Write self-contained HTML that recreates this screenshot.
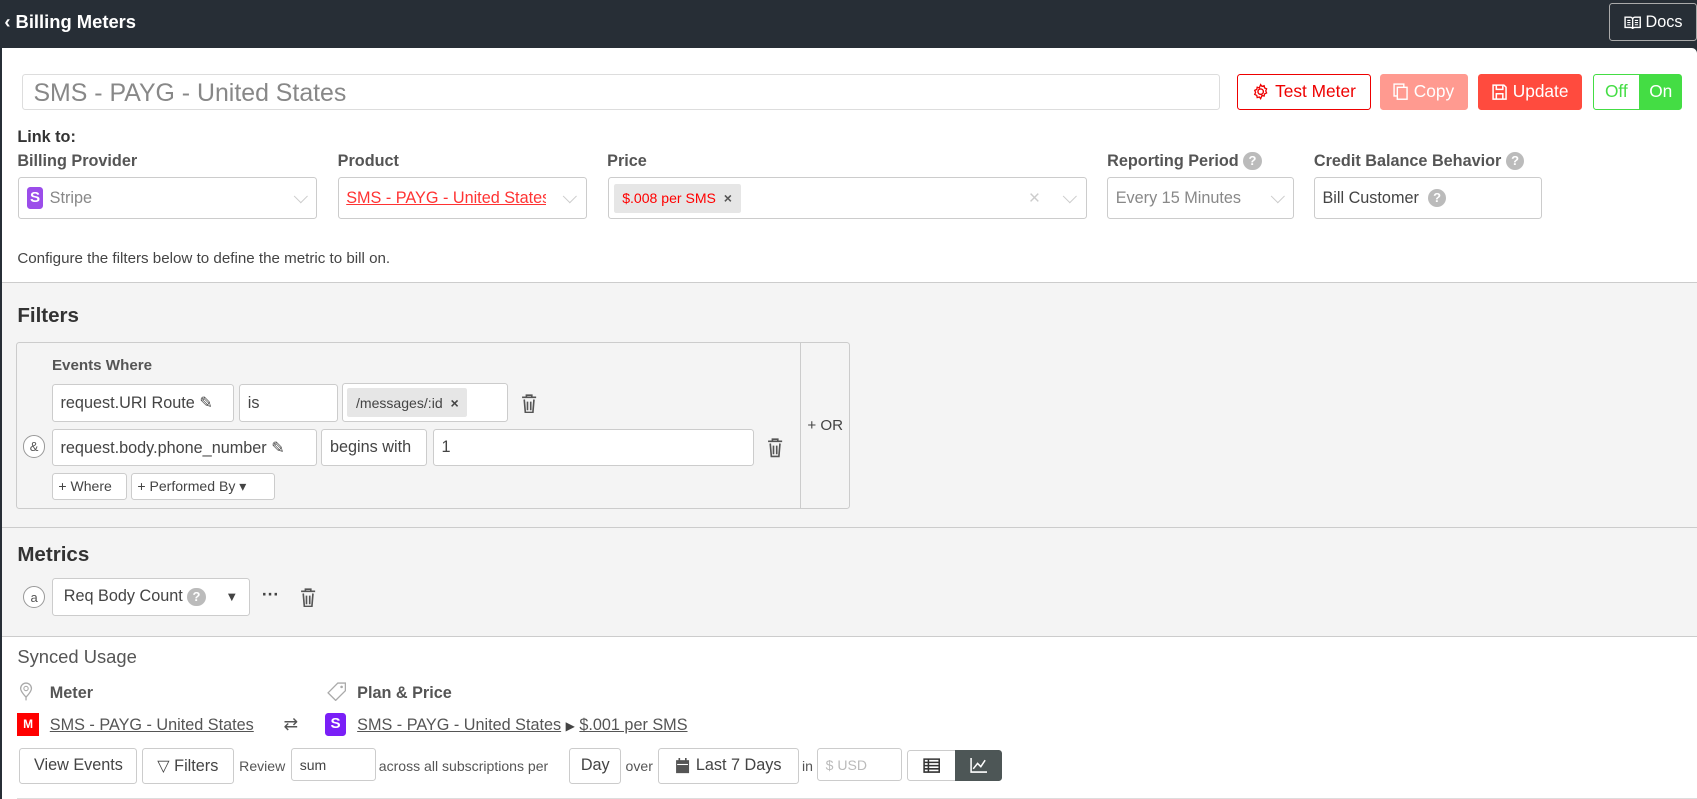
<!DOCTYPE html>
<html><head><style>
html,body{margin:0;padding:0;background:#272e36;overflow:hidden}
#w{position:relative;width:1568px;height:738px;zoom:1.08227;font-family:"Liberation Sans",sans-serif;color:#444;}
.a{position:absolute;box-sizing:border-box}
.box{position:absolute;box-sizing:border-box;border:1px solid #ccc;border-radius:3px;background:#fff;font-size:14px;display:flex;align-items:center;padding-left:7px;white-space:nowrap;overflow:hidden}
.lbl{position:absolute;font-size:15px;font-weight:bold;color:#555}
.q{display:inline-block;width:17px;height:17px;border-radius:50%;background:#bbb;color:#fff;font-size:12px;font-weight:bold;text-align:center;line-height:17px;vertical-align:middle}
.chev{position:absolute;right:10px;top:50%;width:8px;height:8px;border-right:1.5px solid #ccc;border-bottom:1.5px solid #ccc;transform:translateY(-70%) rotate(45deg)}
.circ{position:absolute;width:21px;height:21px;border:1px solid #999;border-radius:50%;font-size:12px;text-align:center;line-height:20px;box-sizing:border-box;background:#fff;color:#555}
.btn{position:absolute;box-sizing:border-box;border:1px solid #ccc;border-radius:3px;background:#fff;font-size:14px;display:flex;align-items:center;justify-content:center;white-space:nowrap}
a{color:#555;text-decoration:underline}
</style></head><body><div id="w">
<div class="a" style="left:4px;top:10px;color:#fff;font-size:17px;font-weight:bold">&#8249; Billing Meters</div>
<div class="btn" style="left:1487px;top:3px;width:81px;height:35px;background:#272e36;border-color:#aaa;color:#fff;font-size:15px">
<svg width="16" height="14" viewBox="0 0 16 14" style="margin-right:4px"><path d="M1 2h5c1 0 2 1 2 2v9c0-1-1-1.5-2-1.5H1zM15 2h-5c-1 0-2 1-2 2v9c0-1 1-1.5 2-1.5h5z" fill="none" stroke="#fff" stroke-width="1.3"/><path d="M3 5h3M3 7h3M3 9h3M10 5h3M10 7h3M10 9h3" stroke="#fff"/></svg>Docs</div>
<div class="a" style="left:2px;top:44px;width:1566px;height:694px;background:#fff;border-top-right-radius:5px"></div>
<div class="box" style="left:20px;top:68px;width:1107px;height:34px;border-color:#ddd;font-size:23px;color:#888;padding-left:10px;padding-top:2px">SMS - PAYG - United States</div>
<div class="btn" style="left:1143px;top:68px;width:124px;height:34px;border-color:#e00;color:#e00;font-size:16px"><svg width="16" height="16" viewBox="0 0 16 16" style="margin-right:5px"><circle cx="8" cy="8" r="2.5" fill="none" stroke="#e00" stroke-width="1.3"/><path d="M8 1.5l1.2 1.6 2-.6.4 2 1.9.9-.8 1.9.8 1.9-1.9.9-.4 2-2-.6L8 14.5l-1.2-1.6-2 .6-.4-2-1.9-.9.8-1.9-.8-1.9 1.9-.9.4-2 2 .6z" fill="none" stroke="#e00" stroke-width="1.2"/></svg>Test Meter</div>
<div class="btn" style="left:1275px;top:68px;width:81px;height:34px;border:none;background:#ff9a90;color:#fff;font-size:16px"><svg width="14" height="16" viewBox="0 0 14 16" style="margin-right:5px"><rect x="1" y="1" width="9" height="11" fill="none" stroke="#fff" stroke-width="1.3"/><rect x="4" y="4" width="9" height="11" fill="#ff9a90" stroke="#fff" stroke-width="1.3"/></svg>Copy</div>
<div class="btn" style="left:1366px;top:68px;width:96px;height:34px;border:none;background:#ff4b3e;color:#fff;font-size:16px"><svg width="14" height="15" viewBox="0 0 14 15" style="margin-right:5px"><path d="M1 1h10l2 2v11H1z M4 1v4h6V1 M4 14V9h6v5" fill="none" stroke="#fff" stroke-width="1.4"/></svg>Update</div>
<div class="btn" style="left:1472px;top:68px;width:43px;height:34px;border:1px solid #44dd44;border-radius:3px 0 0 3px;color:#44dd44;font-size:16px">Off</div>
<div class="btn" style="left:1515px;top:68px;width:39px;height:34px;border:none;border-radius:0 3px 3px 0;background:#44dd44;color:#fff;font-size:16px">On</div>
<div class="lbl" style="left:16px;top:118px;color:#333">Link to:</div>
<div class="lbl" style="left:16px;top:140px">Billing Provider</div>
<div class="lbl" style="left:312px;top:140px">Product</div>
<div class="lbl" style="left:561px;top:140px">Price</div>
<div class="lbl" style="left:1023px;top:140px">Reporting Period <span class="q">?</span></div>
<div class="lbl" style="left:1214px;top:140px">Credit Balance Behavior <span class="q">?</span></div>
<div class="box" style="left:17px;top:164px;width:276px;height:38px;color:#888;font-size:15px"><span style="display:inline-block;width:15px;height:20px;background:#9b4dea;border-radius:3px;color:#fff;font-weight:bold;text-align:center;line-height:20px;font-size:14px;margin-right:6px">S</span>Stripe<i class="chev"></i></div>
<div class="box" style="left:312px;top:164px;width:230px;height:38px;font-size:15px"><span style="color:#f33;text-decoration:underline;width:185px;overflow:hidden">SMS - PAYG - United States</span><i class="chev"></i></div>
<div class="box" style="left:562px;top:164px;width:442px;height:38px;padding-left:4px"><span style="background:#e6e6e6;color:#f00;font-size:13px;padding:6px 8px;border-radius:2px">$.008 per SMS &nbsp;<b style="color:#555">×</b></span><span style="position:absolute;right:42px;color:#ccc;font-size:18px">×</span><i class="chev"></i></div>
<div class="box" style="left:1023px;top:164px;width:173px;height:38px;color:#888;font-size:15px">Every 15 Minutes<i class="chev"></i></div>
<div class="box" style="left:1214px;top:164px;width:211px;height:38px;color:#444;font-size:15px">Bill Customer &nbsp;<span class="q">?</span></div>
<div class="a" style="left:16px;top:231px;font-size:14px;color:#444">Configure the filters below to define the metric to bill on.</div>
<div class="a" style="left:2px;top:261px;width:1566px;height:327px;background:#f4f4f4;border-top:1px solid #ccc"></div>
<div class="a" style="left:2px;top:487px;width:1566px;border-top:1px solid #ccc"></div>
<div class="a" style="left:2px;top:588px;width:1566px;border-top:1px solid #ccc"></div>
<div class="a" style="left:16px;top:281px;font-size:19px;font-weight:bold;color:#333">Filters</div>
<div class="a" style="left:15px;top:316px;width:770px;height:154px;border:1px solid #ccc;border-radius:3px"></div>
<div class="a" style="left:739px;top:317px;height:152px;border-left:1px solid #ccc"></div>
<div class="a" style="left:746px;top:385px;font-size:14px">+ OR</div>
<div class="a" style="left:48px;top:330px;font-size:14px;font-weight:bold;color:#555">Events Where</div>
<div class="box" style="left:48px;top:355px;width:168px;height:35px;font-size:15px">request.URI Route ✎</div>
<div class="box" style="left:221px;top:355px;width:91px;height:35px;font-size:15px">is</div>
<div class="box" style="left:316px;top:354px;width:153px;height:36px;padding-left:4px"><span style="background:#e6e6e6;font-size:13px;padding:6px 8px;border-radius:2px">/messages/:id &nbsp;<b>×</b></span></div>
<svg class="a" style="left:481px;top:363px" width="15" height="19" viewBox="0 0 15 19"><path d="M1 4h13M5 4V2h5v2M3 6l1 12h7l1-12M6 8v8M9 8v8" fill="none" stroke="#555" stroke-width="1.5"/></svg>
<div class="circ" style="left:21px;top:402px">&amp;</div>
<div class="box" style="left:48px;top:396px;width:245px;height:35px;font-size:15px">request.body.phone_number ✎</div>
<div class="box" style="left:297px;top:396px;width:98px;height:35px;font-size:15px">begins with</div>
<div class="box" style="left:400px;top:396px;width:297px;height:35px;font-size:15px">1</div>
<svg class="a" style="left:709px;top:404px" width="15" height="19" viewBox="0 0 15 19"><path d="M1 4h13M5 4V2h5v2M3 6l1 12h7l1-12M6 8v8M9 8v8" fill="none" stroke="#555" stroke-width="1.5"/></svg>
<div class="box" style="left:48px;top:437px;width:69px;height:25px;font-size:13px;padding-left:5px">+ Where</div>
<div class="box" style="left:121px;top:437px;width:133px;height:25px;font-size:13px;padding-left:5px">+ Performed By ▾</div>
<div class="a" style="left:16px;top:502px;font-size:19px;font-weight:bold;color:#333">Metrics</div>
<div class="circ" style="left:21px;top:541px">a</div>
<div class="box" style="left:48px;top:534px;width:183px;height:35px;font-size:15px;padding-left:10px">Req Body Count&nbsp;<span class="q">?</span><span style="position:absolute;right:10px;font-size:12px">▼</span></div>
<div class="a" style="left:242px;top:544px;font-size:16px;font-weight:bold;line-height:10px">···</div>
<svg class="a" style="left:277px;top:542px" width="15" height="19" viewBox="0 0 15 19"><path d="M1 4h13M5 4V2h5v2M3 6l1 12h7l1-12M6 8v8M9 8v8" fill="none" stroke="#555" stroke-width="1.5"/></svg>
<div class="a" style="left:16px;top:597px;font-size:17px;color:#555">Synced Usage</div>
<svg class="a" style="left:18px;top:630px" width="13" height="18" viewBox="0 0 13 18"><path d="M6.5 1a5 5 0 0 1 5 5c0 3-5 8-5 8s-5-5-5-8a5 5 0 0 1 5-5z M6.5 14v3" fill="none" stroke="#aaa" stroke-width="1.2"/><circle cx="6.5" cy="6" r="2" fill="none" stroke="#aaa"/></svg>
<div class="a" style="left:46px;top:632px;font-size:15px;font-weight:bold;color:#555">Meter</div>
<svg class="a" style="left:302px;top:630px" width="18" height="18" viewBox="0 0 18 18"><path d="M10 1h7v7L8 17 1 10z" fill="none" stroke="#aaa" stroke-width="1.2"/><circle cx="13.5" cy="4.5" r="1.2" fill="#aaa"/></svg>
<div class="a" style="left:330px;top:632px;font-size:15px;font-weight:bold;color:#555">Plan &amp; Price</div>
<div class="a" style="left:16px;top:659px;width:20px;height:21px;background:#f00;color:#fff;font-size:11px;font-weight:bold;text-align:center;line-height:21px">M</div>
<div class="a" style="left:46px;top:662px;font-size:15px"><a>SMS - PAYG - United States</a></div>
<div class="a" style="left:262px;top:660px;font-size:16px;color:#555">⇄</div>
<div class="a" style="left:300px;top:659px;width:20px;height:21px;background:#7a1ff7;border-radius:3px;color:#fff;font-size:14px;font-weight:bold;text-align:center;line-height:21px">S</div>
<div class="a" style="left:330px;top:662px;font-size:15px;white-space:nowrap"><a>SMS - PAYG - United States</a> <span style="font-size:11px">▶</span> <a>$.001 per SMS</a></div>
<div class="btn" style="left:18px;top:691px;width:109px;height:33px;font-size:15px">View Events</div>
<div class="btn" style="left:131px;top:691px;width:85px;height:33px;font-size:15px">&#9661; Filters</div>
<div class="a" style="left:221px;top:700px;font-size:13px;color:#555">Review</div>
<div class="box" style="left:269px;top:691px;width:78px;height:31px;font-size:13px">sum</div>
<div class="a" style="left:350px;top:700px;font-size:13px;color:#555">across all subscriptions per</div>
<div class="btn" style="left:526px;top:691px;width:48px;height:33px;font-size:15px">Day</div>
<div class="a" style="left:578px;top:700px;font-size:13px;color:#555">over</div>
<div class="btn" style="left:608px;top:691px;width:130px;height:33px;font-size:15px"><svg width="14" height="15" viewBox="0 0 14 15" style="margin-right:5px"><rect x="1" y="2" width="12" height="12" fill="#555"/><path d="M4 0v3M10 0v3" stroke="#555" stroke-width="1.5"/><path d="M2 6h10" stroke="#fff"/></svg>Last 7 Days</div>
<div class="a" style="left:741px;top:700px;font-size:13px;color:#555">in</div>
<div class="box" style="left:755px;top:691px;width:78px;height:31px;font-size:13px;color:#bbb">$ USD</div>
<div class="btn" style="left:838px;top:693px;width:45px;height:29px;border-radius:3px 0 0 3px"><svg width="16" height="14" viewBox="0 0 16 14"><path d="M1 1h14v12H1zM1 4h14M1 7h14M1 10h14M5 1v12" fill="none" stroke="#333" stroke-width="1.4"/></svg></div>
<div class="btn" style="left:882px;top:693px;width:44px;height:29px;background:#4d5656;border-color:#4d5656;border-radius:0 3px 3px 0"><svg width="16" height="14" viewBox="0 0 16 14"><path d="M1 0v13h15M3 10l4-5 3 3 4-6" fill="none" stroke="#fff" stroke-width="1.4"/></svg></div>
<div class="a" style="left:16px;top:737px;width:1552px;border-top:1px solid #ddd"></div>
</div></body></html>
